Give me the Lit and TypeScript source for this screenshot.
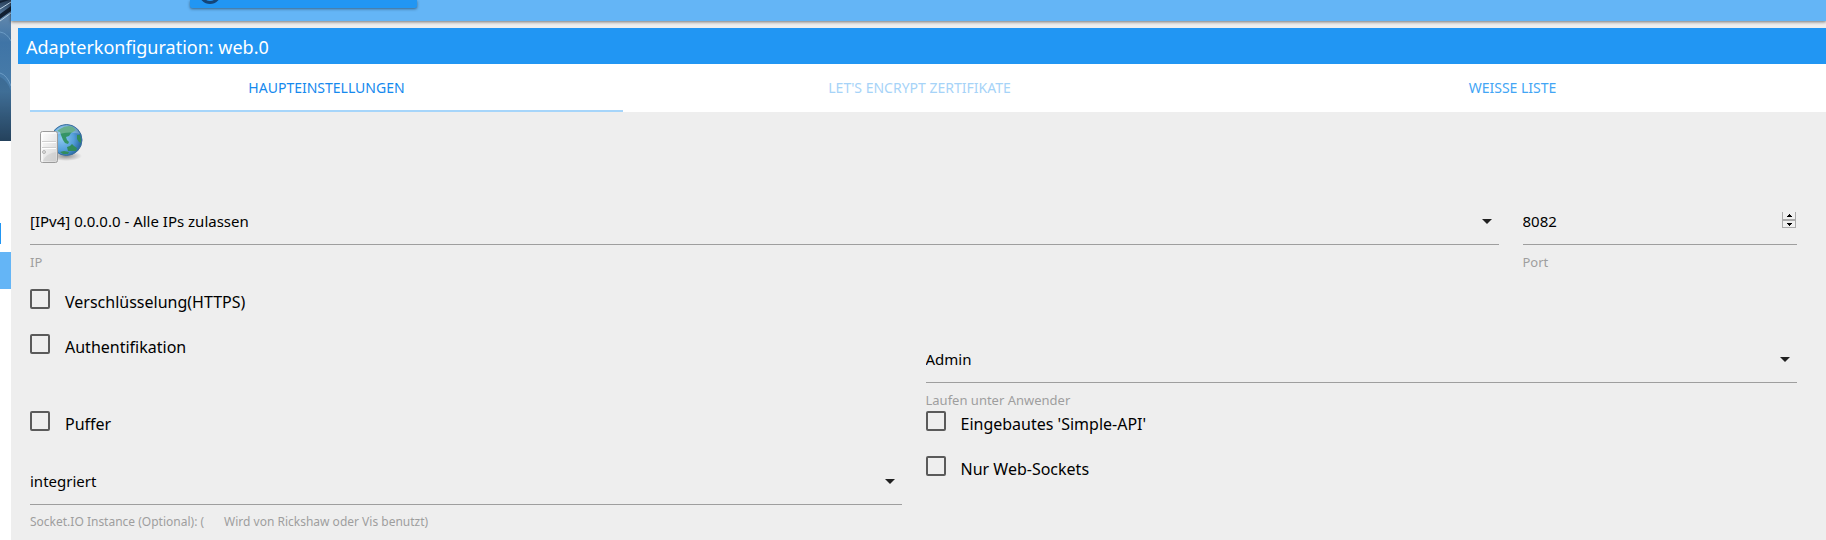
import { LitElement, html, css, svg } from "lit";
import { customElement, property, state } from "lit/decorators.js";
import { classMap } from "lit/directives/class-map.js";

const caret = svg`<path d="M0 0h10L5 5z" fill="#212121"/>`;

@customElement("select-field")
class SelectField extends LitElement {
  @property() label = "";
  @property() hint = "";
  @property({ type: Array }) options: string[] = [];

  static styles = css`
    :host { display: block; margin-top: 16px; }
    .box { position: relative; }
    select {
      appearance: none;
      display: block;
      box-sizing: border-box;
      width: 100%;
      height: 45px;
      margin: 0;
      padding: 0 24px 2px 0;
      border: 0;
      border-bottom: 1px solid #9e9e9e;
      border-radius: 0;
      background: transparent;
      color: #000;
      font: 15px "Noto Sans", sans-serif;
      outline: none;
    }
    .caret {
      position: absolute;
      right: 7px;
      top: 19px;
      width: 10px;
      height: 5px;
      pointer-events: none;
    }
    .label {
      display: flex;
      gap: 20px;
      height: 16px;
      color: #9e9e9e;
      font-size: 13px;
      line-height: 34px;
      white-space: nowrap;
    }
    .label.dense { font-size: 12px; }
  `;

  render() {
    return html`
      <div class="box">
        <select id="control">${this.options.map((o) => html`<option>${o}</option>`)}</select>
        <svg class="caret" viewBox="0 0 10 5">${caret}</svg>
      </div>
      <label class=${classMap({ label: true, dense: this.hint !== "" })} for="control">
        <span>${this.label}</span>${this.hint ? html`<span>${this.hint}</span>` : null}
      </label>
    `;
  }
}

@customElement("port-field")
class PortField extends LitElement {
  @property({ type: Number }) value = 0;

  static styles = css`
    :host { display: block; margin-top: 16px; }
    .box {
      display: flex;
      box-sizing: border-box;
      height: 45px;
      border-bottom: 1px solid #9e9e9e;
    }
    input {
      appearance: textfield;
      flex: 1;
      min-width: 0;
      padding: 0 0 2px;
      border: 0;
      background: transparent;
      color: #000;
      font: 15px "Noto Sans", sans-serif;
      outline: none;
    }
    input::-webkit-inner-spin-button { display: none; }
    .spin {
      display: flex;
      flex-direction: column;
      width: 14px;
      margin: 12px 1px 0 0;
    }
    .step {
      display: flex;
      align-items: center;
      justify-content: center;
      box-sizing: border-box;
      height: 8px;
      padding: 0;
      border: 1px solid #ababab;
      background: #f0f0f0;
    }
    .up { border-top: 0; }
    .step svg { width: 5px; height: 3px; }
    label {
      display: block;
      height: 16px;
      color: #9e9e9e;
      font-size: 13px;
      line-height: 34px;
    }
  `;

  private step(by: number) {
    this.value += by;
  }

  render() {
    return html`
      <div class="box">
        <input id="port" type="number" .value=${String(this.value)} />
        <div class="spin">
          <button class="step up" aria-label="+" @click=${() => this.step(1)}>
            <svg viewBox="0 0 5 3" shape-rendering="crispEdges"><path d="M2 0h1v1h1v1h1v1H0V2h1V1h1z" /></svg>
          </button>
          <button class="step" aria-label="-" @click=${() => this.step(-1)}>
            <svg viewBox="0 0 5 3" shape-rendering="crispEdges"><path d="M0 0h5v1H4v1H3v1H2V2H1V1H0z" /></svg>
          </button>
        </div>
      </div>
      <label for="port">Port</label>
    `;
  }
}

@customElement("check-field")
class CheckField extends LitElement {
  @property() label = "";

  static styles = css`
    :host { display: block; height: 33px; padding-top: 12px; }
    label {
      display: inline-flex;
      gap: 15px;
      font-size: 16px;
      line-height: 26px;
      color: #000;
    }
    input {
      appearance: none;
      box-sizing: border-box;
      width: 20px;
      height: 20px;
      margin: 0;
      border: 2px solid #5a5a5a;
      border-radius: 2px;
    }
    input:checked { background: #2196f3; border-color: #2196f3; }
  `;

  render() {
    return html`<label><input type="checkbox" /><span>${this.label}</span></label>`;
  }
}

@customElement("app-root")
class AppRoot extends LitElement {
  @state() private active = 0;

  private tabs = [
    { label: "Haupteinstellungen", disabled: false },
    { label: "Let's Encrypt Zertifikate", disabled: true },
    { label: "Weisse Liste", disabled: false },
  ];

  static styles = css`
    :host {
      display: grid;
      grid-template-columns: 11px minmax(0, 1fr);
      min-height: 100vh;
      overflow: hidden;
      font-family: "Noto Sans", sans-serif;
    }
    .drawer { background: #fff; overflow: hidden; }
    .photo { display: block; width: 11px; height: 141px; }
    .item { width: 1px; height: 21px; margin-top: 82px; background: #2196f3; }
    .item.selected { width: auto; height: 37px; margin-top: 8px; background: #64b5f6; }
    .main { background: #eee; }
    .toolbar {
      height: 21px;
      padding-left: 179px;
      background: #64b5f6;
      box-shadow: 0 1px 3px rgba(0, 0, 0, 0.5);
    }
    .instance {
      display: block;
      width: 227px;
      height: 8px;
      padding: 0 0 0 10px;
      border: 0;
      border-radius: 0 0 2px 2px;
      background: #2196f3;
      box-shadow: 0 1px 3px rgba(0, 0, 0, 0.45);
    }
    .instance svg { display: block; width: 22px; height: 8px; }
    .panel { padding: 7px 0 0 7px; }
    .title {
      margin: 0;
      padding: 0 8px;
      background: #2196f3;
      color: #fff;
      font-size: 18px;
      font-weight: 400;
      line-height: 38px;
      height: 36px;
    }
    .tabs {
      display: flex;
      height: 48px;
      margin-left: 12px;
      padding-right: 17px;
      background: #fff;
    }
    .tab {
      flex: 1;
      padding: 0;
      border: 0;
      border-bottom: 2px solid transparent;
      background: none;
      color: #42a5f5;
      font: 14px "Noto Sans", sans-serif;
      text-transform: uppercase;
    }
    .tab.active { color: #1589ee; border-bottom-color: #a6d5fa; }
    .tab:disabled { color: #a6d3f8; }
    .content { padding: 8px 17px 0 0; }
    .logo { display: block; width: 48px; height: 48px; margin: 0 0 16px 20px; }
    .grid { display: grid; grid-template-columns: repeat(12, minmax(0, 1fr)); }
    .grid > * { margin-left: 12px; margin-right: 12px; }
    .address { margin-bottom: 16px; }
    .wide { grid-column: span 10; }
    .narrow { grid-column: span 2; }
    .half { grid-column: span 6; }
    .full { grid-column: span 12; }
  `;

  render() {
    return html`
      <aside class="drawer">
        <svg class="photo" viewBox="0 0 11 141" preserveAspectRatio="none">
          <defs>
            <linearGradient id="sky" x1="0" y1="0" x2="0" y2="1">
              <stop offset="0" stop-color="#263b54" />
              <stop offset=".12" stop-color="#5f86ac" />
              <stop offset=".3" stop-color="#3f74a6" />
              <stop offset=".65" stop-color="#497da9" />
              <stop offset="1" stop-color="#284661" />
            </linearGradient>
          </defs>
          <path fill="url(#sky)" d="M0 0h11v141H0z" />
          <path d="M0 3L9 0H4L0 1zM0 14L11 6v5L0 19z" fill="#111f31" />
          <path d="M0 9L11 2M0 21L11 13" stroke="#b9d0e2" fill="none" />
          <path d="M0 32q7 1 11 9M0 73q7 2 11 13" stroke="#6c9cc5" fill="none" />
          <path d="M0 77q7 3 11 14v50H0z" fill="#17324d" opacity=".2" />
        </svg>
        <div class="item"></div>
        <div class="item selected"></div>
      </aside>
      <main class="main">
        <header class="toolbar">
          <button class="instance" aria-label="Instanz">
            <svg viewBox="0 0 22 8">
              <circle cx="10" cy="-7" r="9.5" fill="none" stroke="#144578" stroke-width="3" />
            </svg>
          </button>
        </header>
        <section class="panel">
          <h1 class="title">Adapterkonfiguration: web.0</h1>
          <nav class="tabs">
            ${this.tabs.map(
              (t, i) => html`<button
                class=${classMap({ tab: true, active: this.active === i })}
                ?disabled=${t.disabled}
                @click=${() => (this.active = i)}
              >${t.label}</button>`
            )}
          </nav>
          <div class="content">
            ${this.logo()}
            <div class="grid address">
              <select-field class="wide" label="IP" .options=${["[IPv4] 0.0.0.0 - Alle IPs zulassen"]}></select-field>
              <port-field class="narrow" .value=${8082}></port-field>
            </div>
            <div class="grid">
              <check-field class="full" label="Verschlüsselung(HTTPS)"></check-field>
              <check-field class="half" label="Authentifikation"></check-field>
              <select-field class="half" label="Laufen unter Anwender" .options=${["Admin"]}></select-field>
              <check-field class="half" label="Puffer"></check-field>
              <check-field class="half" label="Eingebautes 'Simple-API'"></check-field>
              <select-field
                class="half"
                label="Socket.IO Instance (Optional): ("
                hint="Wird von Rickshaw oder Vis benutzt)"
                .options=${["integriert"]}
              ></select-field>
              <check-field class="half" label="Nur Web-Sockets"></check-field>
            </div>
          </div>
        </section>
      </main>
    `;
  }

  private logo() {
    return html`
      <svg class="logo" viewBox="0 0 48 48">
        <defs>
          <radialGradient id="sea" cx=".35" cy=".45" r=".7">
            <stop offset="0" stop-color="#8cc8f0" />
            <stop offset=".55" stop-color="#559fda" />
            <stop offset="1" stop-color="#1f5c98" />
          </radialGradient>
          <linearGradient id="case" x1="0" y1="0" x2="1" y2="1">
            <stop offset="0" stop-color="#fff" />
            <stop offset="1" stop-color="#d6d6d6" />
          </linearGradient>
          <radialGradient id="shade">
            <stop offset="0" stop-color="#000" stop-opacity=".4" />
            <stop offset="1" stop-color="#000" stop-opacity="0" />
          </radialGradient>
        </defs>
        <ellipse cx="28" cy="36" rx="16" ry="5" fill="url(#shade)" />
        <circle cx="28.5" cy="20" r="15.5" fill="url(#sea)" stroke="#3a6f9c" />
        <path d="M22 9q4-3 9-3l4 1 3 3-3 2-2 1-2 3-3 1 1 3 2 2-1 2-3-1-2-3-2-5-1-3-3-1z" fill="#359466" />
        <path d="M39 15l3 0 1 4v4l-2-1-2-3zM29 27l3-1 2-2 2 2 3 2-1 3-4 0-4 0zM22 32l4-1 5 1-1 2-5 0z" fill="#328c5b" />
        <path d="M15 16Q19 5 29 5q10 1 13 9-12-4-27 2z" fill="#fff" opacity=".25" />
        <rect x="2.5" y="11.5" width="17" height="31" rx="2" fill="url(#case)" stroke="#9b9b9b" />
        <path d="M4 42V14q0-1 1-1h13" fill="none" stroke="#fff" />
        <path d="M4 21.5h14M4 27.5h14" stroke="#d0d0d0" />
        <path d="M4 22.5h14M4 28.5h14" stroke="#fff" />
        <circle cx="6" cy="32" r="1.5" fill="#dedede" stroke="#b3b3b3" />
        <path d="M5 41q2-7 13-9v9z" fill="#c4c4c4" opacity=".45" />
      </svg>
    `;
  }
}
